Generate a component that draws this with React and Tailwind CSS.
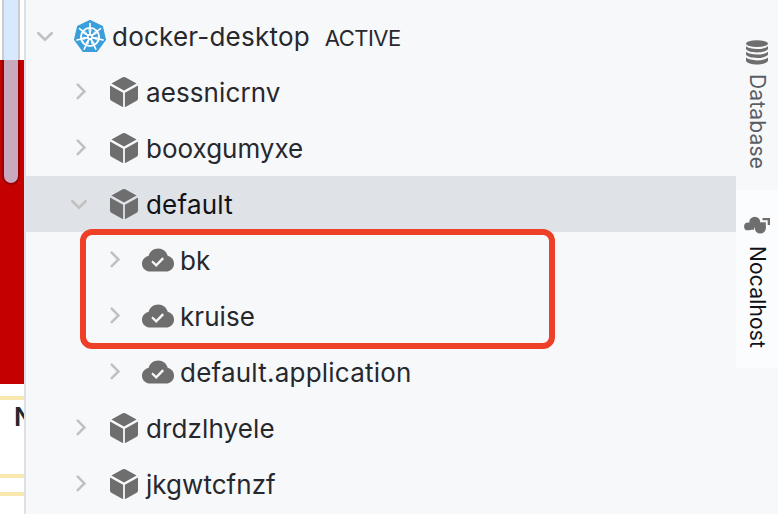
function Chevron({ open }) {
  return (
    <svg className="h-6 w-6 shrink-0" viewBox="0 0 24 24" fill="none" stroke="#c1c1c1" strokeWidth="2.6" strokeLinecap="round" strokeLinejoin="miter">
      {open ? <path d="M5.3 9.200 12 15.800 18.700 9.200" /> : <path d="M12.700 4.700 19.400 11.400 12.700 18.100" />}
    </svg>
  );
}

function Cube() {
  return (
    <svg className="h-8 w-8 shrink-0" viewBox="0 0 32 32" fill="#6e6e6e">
      <path d="M14.7 1.3q1.3-.7 2.6 0L28.6 7.6 16 14.6 3.4 7.6z" />
      <path d="M2 9.4 15.1 16.7V31q-.5 0-1-.3L3.3 24.8Q2 24 2 22.6z" />
      <path d="M30 9.4 16.9 16.7V31q.5 0 1-.3L28.7 24.8Q30 24 30 22.6z" />
    </svg>
  );
}

function Cloud() {
  return (
    <svg className="h-8 w-8 shrink-0" viewBox="0 0 32 32">
      <path d="M8.4 27.5C3.6 27.5 0 24.2 0 19.7c0-4 2.8-7.2 6.5-7.8C8 7.4 11.6 4.6 16.2 4.6c4.7 0 8.3 2.9 9.6 7.5C29.5 12.8 32 15.8 32 19.7c0 4.5-3.6 7.8-8.2 7.8z" fill="#6e6e6e" />
      <path d="m10 17.2 4.2 4.1 7-7.2" fill="none" stroke="#f7f8fa" strokeWidth="2.3" />
    </svg>
  );
}

const spokes = [0, 1, 2, 3, 4, 5, 6];

function Kubernetes() {
  return (
    <svg className="h-8 w-8 shrink-0" viewBox="0 0 32 32">
      <path d="M16 1 28 6.7 31 19.6 22.7 31H9.300L1 19.600 4 6.700z" fill="#3a9fdb" stroke="#3a9fdb" strokeWidth="2" strokeLinejoin="round" />
      <g fill="none" stroke="#fff">
        <circle cx="16" cy="17" r="9.1" strokeWidth="1.900" />
        {spokes.map((n) => (
          <g key={n} transform={`rotate(${(n * 360) / 7} 16 17)`}>
            <path d="M16 15V3.600" strokeWidth="1.600" strokeLinecap="round" />
            <path d="M14.600 9.500 16 14l1.400-4.500" strokeWidth=".8" />
          </g>
        ))}
        <circle cx="16" cy="17" r="2.300" strokeWidth="1.700" />
      </g>
    </svg>
  );
}

function Row({ label, tracking, indent, icon, open, selected, badge }) {
  return (
    <div className={`flex h-14 shrink-0 items-center ${indent} ${selected ? "bg-[#dfe2e7] text-[#111216]" : ""}`}>
      <Chevron open={open} />
      <div className={icon === "kubernetes" ? "ml-[17px]" : selected ? "ml-[17px]" : "ml-[19px]"}>
        {icon === "kubernetes" ? <Kubernetes /> : icon === "cube" ? <Cube /> : <Cloud />}
      </div>
      <span className={`ml-1.5 mt-0.5 whitespace-nowrap text-[26px] leading-8 ${tracking}`}>{label}</span>
      {badge && <span className="ml-[15px] mt-1 text-[22px] leading-8 tracking-[-0.55px]">{badge}</span>}
    </div>
  );
}

export default function App() {
  return (
    <div className="flex h-[514px] w-[778px] overflow-hidden bg-[#f7f8fa] font-['Inter',sans-serif] text-[#27282e]">
      <div className="relative flex w-6 shrink-0 flex-col overflow-hidden bg-white">
        <div className="mt-[60px] h-[324px] shrink-0 bg-[#c40000]" />
        <div className="mt-3 h-1 shrink-0 bg-[#f8e8ae]" />
        <div className="h-[74px] shrink-0 pl-3.5 pt-px font-['Inter',sans-serif] text-[26px] font-semibold leading-8 text-[#24292e]">N</div>
        <div className="h-1 shrink-0 bg-[#f8e8ae]" />
        <div className="mt-3.5 h-1 shrink-0 bg-[#f8e8ae]" />
        <div className="absolute -top-4 left-0.5 h-[201px] w-[18px] rounded-full border-2 border-black/20 bg-[#cae2fe]/75 bg-clip-padding" />
      </div>
      <div className="w-0.5 shrink-0 bg-[#dfe1e7]" />

      <div className="relative flex w-[710px] shrink-0 flex-col pt-2">
        <Row label="docker-desktop" tracking="tracking-[0.22px]" indent="pl-[7px]" icon="kubernetes" open badge="ACTIVE" />
        <Row label="aessnicrnv" tracking="tracking-[0.1px]" indent="pl-[39px]" icon="cube" />
        <Row label="booxgumyxe" tracking="tracking-[0px]" indent="pl-[39px]" icon="cube" />
        <Row label="default" tracking="tracking-[0.2px]" indent="pl-[41px]" icon="cube" open selected />
        <Row label="bk" tracking="tracking-[0.1px]" indent="pl-[73px]" icon="cloud" />
        <Row label="kruise" tracking="tracking-[0.05px]" indent="pl-[73px]" icon="cloud" />
        <Row label="default.application" tracking="tracking-[0.22px]" indent="pl-[73px]" icon="cloud" />
        <Row label="drdzlhyele" tracking="tracking-[0.12px]" indent="pl-[39px]" icon="cube" />
        <Row label="jkgwtcfnzf" tracking="tracking-[0.05px]" indent="pl-[39px]" icon="cube" />
        <div className="absolute left-[54px] top-[229px] h-[120px] w-[475px] rounded-xl border-[6px] border-[#ee4026]" />
      </div>

      <div className="flex w-[42px] shrink-0 flex-col">
        <div className="flex h-[190px] shrink-0 flex-col items-center pt-10 text-[#5a5d63]">
          <svg className="h-[26px] w-[22px] shrink-0" viewBox="0 0 22 26" fill="#6e6e6e">
            <ellipse cx="11" cy="3.7" rx="11" ry="3.4" />
            <path d="M0 6.2c4 3.7 18 3.7 22 0v2.8c-2 4.5-20 4.5-22 0zM0 11.8c4 3.7 18 3.7 22 0v2.8c-2 4.5-20 4.5-22 0zM0 17.6c4 3.7 18 3.7 22 0v3.2c-2 5-20 5-22 0z" />
          </svg>
          <span className="mt-2 text-[21px] leading-7 tracking-[0.15px] [writing-mode:vertical-rl]">Database</span>
        </div>
        <div className="flex h-[178px] shrink-0 flex-col items-center bg-[#fbfcfd] pt-[26px] text-[#111216]">
          <svg className="h-[18px] w-[26px] shrink-0" viewBox="0 0 26 18" fill="#6e6e6e">
            <circle cx="4" cy="10.4" r="3.9" />
            <circle cx="10.800" cy="6.200" r="5.500" />
            <circle cx="16.300" cy="12" r="5.600" />
            <path d="M5 7.500h5v6.300H5zM12 4l5 3.500-3 4zM18.500 2H26v7h-2.300V4.300h-5.200zM17 6.200h4.800V12h-3z" />
          </svg>
          <span className="mt-3 text-[21px] leading-7 tracking-[0.18px] [writing-mode:vertical-rl]">Nocalhost</span>
        </div>
      </div>
    </div>
  );
}
